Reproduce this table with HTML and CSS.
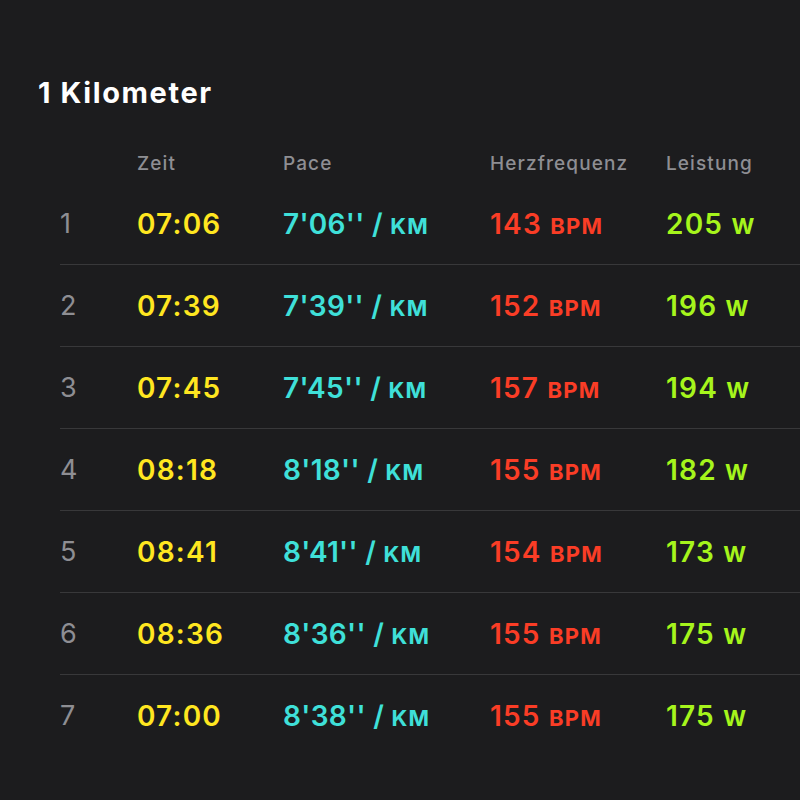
FILE: index.html
```html
<!DOCTYPE html>
<html lang="de">
<head>
<meta charset="utf-8">
<link rel="stylesheet" href="styles.css">
</head>
<body>
<div class="page">
  <h1 class="title">1 Kilometer</h1>
  <div class="table">
    <div class="row head">
      <span></span><span>Zeit</span><span>Pace</span><span>Herzfrequenz</span><span>Leistung</span>
    </div>
    <div class="row"><span class="num">1</span><span class="time">07:06</span><span class="pace">7'06'' / <small>KM</small></span><span class="hr">143 <small>BPM</small></span><span class="pw">205 <small>W</small></span></div>
    <div class="row"><span class="num">2</span><span class="time">07:39</span><span class="pace">7'39'' / <small>KM</small></span><span class="hr">152 <small>BPM</small></span><span class="pw">196 <small>W</small></span></div>
    <div class="row"><span class="num">3</span><span class="time">07:45</span><span class="pace">7'45'' / <small>KM</small></span><span class="hr">157 <small>BPM</small></span><span class="pw">194 <small>W</small></span></div>
    <div class="row"><span class="num">4</span><span class="time">08:18</span><span class="pace">8'18'' / <small>KM</small></span><span class="hr">155 <small>BPM</small></span><span class="pw">182 <small>W</small></span></div>
    <div class="row"><span class="num">5</span><span class="time">08:41</span><span class="pace">8'41'' / <small>KM</small></span><span class="hr">154 <small>BPM</small></span><span class="pw">173 <small>W</small></span></div>
    <div class="row"><span class="num">6</span><span class="time">08:36</span><span class="pace">8'36'' / <small>KM</small></span><span class="hr">155 <small>BPM</small></span><span class="pw">175 <small>W</small></span></div>
    <div class="row last"><span class="num">7</span><span class="time">07:00</span><span class="pace">8'38'' / <small>KM</small></span><span class="hr">155 <small>BPM</small></span><span class="pw">175 <small>W</small></span></div>
  </div>
</div>
</body>
</html>
```
FILE: styles.css
```css
html, body {
  margin: 0;
  padding: 0;
  background: #1c1c1e;
}
body {
  width: 800px;
  height: 800px;
  overflow: hidden;
  font-family: Inter, "Noto Sans", sans-serif;
}
.page {
  padding-top: 74px;
}
.title {
  margin: 0 0 0 38px;
  font-size: 29px;
  line-height: 38px;
  font-weight: 700;
  color: #ffffff;
  letter-spacing: 1.6px;
}
.table {
  margin-left: 60px;
  margin-top: 39px;
}
.row {
  display: grid;
  grid-template-columns: 77px 146px 207px 176px 1fr;
  align-items: center;
  height: 81px;
  border-bottom: 1px solid #38383a;
  font-size: 28px;
  font-weight: 600;
  letter-spacing: 1.2px;
  white-space: nowrap;
}
.row.last {
  border-bottom: none;
}
.row.head {
  height: 24px;
  border-bottom: none;
  font-size: 19px;
  font-weight: 500;
  letter-spacing: 1.1px;
  color: #8e8e93;
  margin-bottom: 8px;
}
.num {
  color: #8e8e93;
  font-weight: 400;
  font-size: 27px;
}
.time { color: #ffe620; }
.pace { color: #3fe0d9; letter-spacing: 0.3px; }
.hr { color: #fa3d26; }
.pw { color: #a6f51c; }
small {
  font-size: 22px;
  font-weight: 700;
  letter-spacing: 1.2px;
}
```
